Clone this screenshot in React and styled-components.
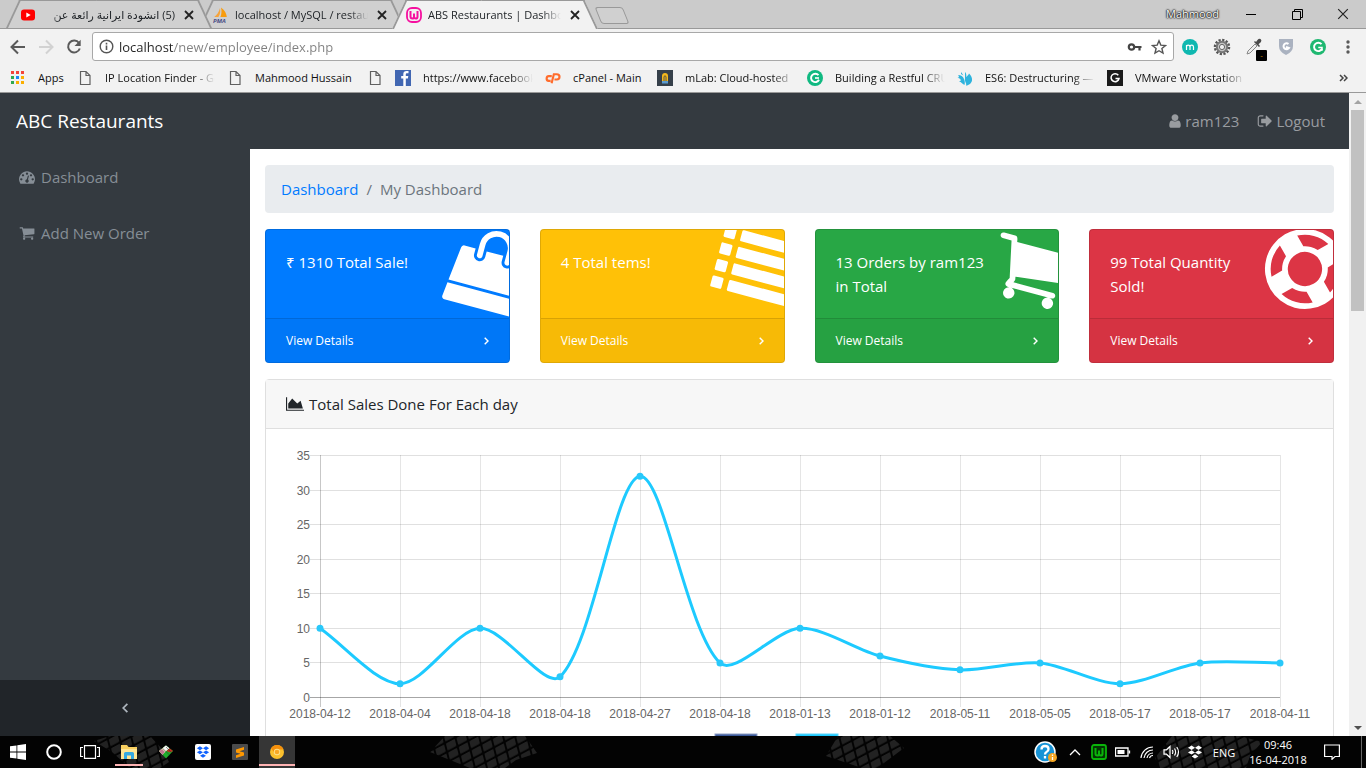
import React from "react";
import styled, { createGlobalStyle } from "styled-components";

const GlobalStyle = createGlobalStyle`
  *, *::before, *::after { box-sizing: border-box; }
  body { margin: 0; font-family: "Open Sans", "Noto Sans", "DejaVu Sans", sans-serif; font-size: 15px; line-height: 24px; color: #212529; background: #fff; }
  a { text-decoration: none; color: inherit; }
  button { font: inherit; border: 0; padding: 0; background: none; color: inherit; }
  svg { display: block; flex: none; }
`;

/* ---------- shared glyphs: [view box, path] ---------- */

const SQUARE = "0 0 1792 1792";

const glyphs = {
  user: [SQUARE, "M1536 1399q0 109-62.5 187t-150.5 78h-854q-88 0-150.5-78t-62.5-187q0-85 8.5-160.5t31.5-152 58.5-131 94-89 134.5-34.5q131 128 313 128t313-128q76 0 134.5 34.5t94 89 58.5 131 31.5 152 8.5 160.5zm-256-887q0 159-112.5 271.5t-271.5 112.5-271.5-112.5-112.5-271.5 112.5-271.5 271.5-112.5 271.5 112.5 112.5 271.5z"],
  signOut: ["96 0 1792 1792", "M704 1440q0 4 1 20t.5 26.5-3 23.5-10 19.5-20.5 6.5h-320q-119 0-203.5-84.5t-84.5-203.5v-704q0-119 84.5-203.5t203.5-84.5h320q13 0 22.5 9.5t9.5 22.5q0 4 1 20t.5 26.5-3 23.5-10 19.5-20.5 6.5h-320q-66 0-113 47t-47 113v704q0 66 47 113t113 47h312l11.5 1 11.5 3 8 5.5 7 9 2 13.5zm928-544q0 26-19 45l-544 544q-19 19-45 19t-45-19-19-45v-288h-448q-26 0-45-19t-19-45v-384q0-26 19-45t45-19h448v-288q0-26 19-45t45-19 45 19l544 544q19 19 19 45z"],
  cart: [SQUARE, "M704 1536q0 52-38 90t-90 38-90-38-38-90 38-90 90-38 90 38 38 90zm896 0q0 52-38 90t-90 38-90-38-38-90 38-90 90-38 90 38 38 90zm128-1088v512q0 24-16.5 42.5t-40.5 21.5l-1044 122q13 60 13 70 0 16-24 64h920q26 0 45 19t19 45-19 45-45 19h-1024q-26 0-45-19t-19-45q0-11 8-31.5t16-36 21.5-40 15.5-29.5l-177-823h-204q-26 0-45-19t-19-45 19-45 45-19h256q16 0 28.5 6.5t19.5 15.5 13 24.5 8 26 5.5 29.5 4.5 26h1201q26 0 45 19t19 45z"],
  gauge: [SQUARE, "M384 1152q0-53-37.5-90.5t-90.5-37.5-90.5 37.5-37.5 90.5 37.5 90.5 90.5 37.5 90.5-37.5 37.5-90.5zm192-448q0-53-37.5-90.5t-90.5-37.5-90.5 37.5-37.5 90.5 37.5 90.5 90.5 37.5 90.5-37.5 37.5-90.5zm428 481l101-382q6-26-7.5-48.5t-38.5-29.5-48 6.5-30 39.5l-101 382q-60 5-107 43.5t-63 98.5q-20 77 20 146t117 89 146-20 89-117q16-60-6-117t-72-91zm660-33q0-53-37.5-90.5t-90.5-37.5-90.5 37.5-37.5 90.5 37.5 90.5 90.5 37.5 90.5-37.5 37.5-90.5zm-640-640q0-53-37.5-90.5t-90.5-37.5-90.5 37.5-37.5 90.5 37.5 90.5 90.5 37.5 90.5-37.5 37.5-90.5zm448 192q0-53-37.5-90.5t-90.5-37.5-90.5 37.5-37.5 90.5 37.5 90.5 90.5 37.5 90.5-37.5 37.5-90.5zm320 448q0 261-141 483-19 29-54 29h-1402q-35 0-54-29-141-221-141-483 0-182 71-348t191-286 286-191 348-71 348 71 286 191 191 286 71 348z"],
  area: ["0 0 2048 1792", "M2048 1536v128h-2048v-1536h128v1408h1920zm-384-1024l256 896h-1664v-576l448-576 576 576z"],
  ring: [SQUARE, "M896 0q182 0 348 71t286 191 191 286 71 348-71 348-191 286-286 191-348 71-348-71-286-191-191-286-71-348 71-348 191-286 286-191 348-71zm0 128q-190 0-361 90l194 194q82-28 167-28t167 28l194-194q-171-90-361-90zm-678 1129l194-194q-28-82-28-167t28-167l-194-194q-90 171-90 361t90 361zm678 407q190 0 361-90l-194-194q-82 28-167 28t-167-28l-194 194q171 90 361 90zm0-384q159 0 271.5-112.5t112.5-271.5-112.5-271.5-271.5-112.5-271.5 112.5-112.5 271.5 112.5 271.5 271.5 112.5zm484-217l194 194q90-171 90-361t-90-361l-194 194q28 82 28 167t-28 167z"],
  bag: ["-214 30 1792 1792", "M1757 1408l35 313q3 28-16 50-19 21-48 21h-1664q-29 0-48-21-19-22-16-50l35-313h1722zm-93-839l86 775h-1708l86-775q3-24 21-40.5t43-16.5h256v128q0 53 37.5 90.5t90.5 37.5 90.5-37.5 37.5-90.5v-128h384v128q0 53 37.5 90.5t90.5 37.5 90.5-37.5 37.5-90.5v-128h256q25 0 43 16.5t21 40.5zm-384-185v256q0 26-19 45t-45 19-45-19-19-45v-256q0-106-75-181t-181-75-181 75-75 181v256q0 26-19 45t-45 19-45-19-19-45v-256q0-159 112.5-271.5t271.5-112.5 271.5 112.5 112.5 271.5z"],
  list: [SQUARE, [128, 512, 896, 1280].map((y) => `M32 ${y}h192q32 0 32 32v192q0 32-32 32h-192q-32 0-32-32v-192q0-32 32-32zM416 ${y}h1344q32 0 32 32v192q0 32-32 32h-1344q-32 0-32-32v-192q0-32 32-32z`).join("")],
};

const Glyph = ({ name, size = 16 }) => {
  const [box, d] = glyphs[name];
  const w = Number(box.split(" ")[2]);
  return (
    <svg width={Math.round((size * w) / 1792)} height={size} viewBox={box} fill="currentColor" overflow="visible" aria-hidden="true">
      <path d={d} />
    </svg>
  );
};

const Chevron = ({ left, size = 8 }) => (
  <svg width={(size * 5) / 8} height={size} viewBox="0 0 5 8" fill="none" stroke="currentColor" strokeWidth="1.400" aria-hidden="true">
    <path d={left ? "M4.300.7L1 4l3.300 3.300" : "M.7.7L4 4 .7 7.300"} />
  </svg>
);

const Dropbox = ({ size, fill }) => (
  <svg width={size} height={size} viewBox="0 0 16 16" fill={fill}>
    <path d="M4.500 1.500l3.500 2.200-3.500 2.200L1 3.700zM11.500 1.500L15 3.700l-3.500 2.200L8 3.700zM4.500 6.200L8 8.400l-3.500 2.200L1 8.400zM11.500 6.200L15 8.400l-3.500 2.200L8 8.400zM8 10.200l3.400 2.200L8 14.600l-3.400-2.200z" />
  </svg>
);

/* ---------- window frame ---------- */

const Screen = styled.div`
  display: flex;
  flex-direction: column;
  height: 100vh;
  overflow: hidden;
`;

const TabStrip = styled.div`
  display: flex;
  justify-content: space-between;
  height: 29px;
  background: #cbcbcb;
  border-bottom: 1px solid #999;
  font-size: 11px;
  line-height: 16px;
`;

const Tabs = styled.div`
  display: flex;
  padding-left: 6px;
`;

const Tab = styled.div`
  position: relative;
  z-index: ${(p) => p.$z};
  display: flex;
  align-items: center;
  gap: 6px;
  width: 205px;
  height: ${(p) => (p.$active ? 29 : 28)}px;
  padding: 2px 14px ${(p) => (p.$active ? 1 : 0)}px 14px;
  & + & { margin-left: -12px; }
  &::before, &::after {
    content: "";
    position: absolute;
    z-index: -1;
    top: 0;
    bottom: 0;
    width: 50%;
    background: ${(p) => (p.$active ? "#f2f2f2" : "#d0d0d0")};
    border-top: 1px solid #999;
  }
  &::before { left: 0; border-left: 2px solid #999; transform: skewX(-25deg); transform-origin: bottom left; }
  &::after { right: 0; border-right: 2px solid #999; transform: skewX(25deg); transform-origin: bottom right; }
`;

const TabTitle = styled.span`
  flex: 1;
  min-width: 0;
  overflow: hidden;
  white-space: nowrap;
  mask-image: linear-gradient(${(p) => (p.dir === "rtl" ? "270deg" : "90deg")}, #000 86%, transparent);
`;

const TabClose = styled.button`
  display: grid;
  place-items: center;
  width: 16px;
  height: 16px;
`;

const NewTab = styled.button`
  width: 28px;
  height: 17px;
  margin: 7px 0 0 1px;
  border: 1px solid #999;
  border-radius: 3px;
  background: #d0d0d0;
  transform: skewX(22deg);
`;

const WindowControls = styled.div`
  display: flex;
  align-items: center;
`;

const Profile = styled.span`
  padding-right: 9px;
  color: #fff;
  text-shadow: 0 0 2px #000, 0 0 2px #000, 0 0 1px #000;
`;

const WindowButton = styled.button`
  display: grid;
  place-items: center;
  width: 46px;
  height: 28px;
`;

const Toolbar = styled.div`
  display: flex;
  align-items: center;
  height: 35px;
  padding: 0 4px;
  background: #f2f2f2;
`;

const ToolButton = styled.button`
  position: relative;
  display: grid;
  place-items: center;
  width: ${(p) => p.$w || 32}px;
  height: 28px;
`;

const AddressBar = styled.label`
  display: flex;
  align-items: center;
  flex: 1;
  gap: 5px;
  height: 29px;
  margin-left: 4px;
  padding: 0 6px;
  border: 1px solid #a8a8a8;
  border-radius: 3px;
  background: #fff;
`;

const AddressInput = styled.input`
  flex: 1;
  min-width: 0;
  padding: 0;
  border: 0;
  outline: 0;
  font: 13px/20px "Open Sans", "Noto Sans", sans-serif;
  color: transparent;
  background: linear-gradient(90deg, #222 55px, #808080 55px);
  background-clip: text;
  -webkit-background-clip: text;
`;

const AddressActions = styled.span`
  display: flex;
  gap: 9px;
`;

const BadgeDot = styled.span`
  position: absolute;
  right: 3px;
  bottom: 0;
  width: 11px;
  height: 11px;
  border-radius: 1px;
  background: #000;
  color: #d98c00;
  font-size: 8px;
  line-height: 10px;
`;

const Bookmarks = styled.nav`
  display: flex;
  align-items: center;
  gap: 12px;
  height: 29px;
  padding: 0 18px 0 10px;
  border-bottom: 1px solid #999;
  background: #f2f2f2;
  font-size: 11px;
  line-height: 16px;
  color: #111;
`;

const Bookmark = styled.a`
  display: flex;
  align-items: center;
  gap: 12px;
`;

const BookmarkLabel = styled.span`
  width: ${(p) => p.$w}px;
  overflow: hidden;
  white-space: nowrap;
  ${(p) => p.$fade && "mask-image: linear-gradient(90deg, #000 80%, transparent);"}
`;

const More = styled.button`
  margin-left: auto;
`;

/* ---------- web page ---------- */

const Viewport = styled.div`
  display: flex;
  flex: 1;
  min-height: 0;
`;

const Page = styled.div`
  display: flex;
  flex: 1;
  flex-direction: column;
  min-width: 0;
`;

const Navbar = styled.header`
  display: flex;
  align-items: center;
  justify-content: space-between;
  height: 56px;
  padding: 0 16px;
  background: #343a40;
`;

const Brand = styled.a`
  font-size: 19px;
  line-height: 30px;
  color: #fff;
`;

const NavLinks = styled.nav`
  display: flex;
`;

const NavLink = styled.a`
  display: flex;
  align-items: center;
  padding: 0 8px;
  color: #999ca0;
`;

const IconCell = styled.span`
  display: grid;
  place-items: center;
  width: 21px;
`;

const Body = styled.div`
  display: flex;
  flex: 1;
  min-height: 0;
`;

const Sidebar = styled.nav`
  display: flex;
  flex-direction: column;
  width: 250px;
  background: #343a40;
  color: #868e96;
`;

const SideLink = styled.a`
  display: flex;
  align-items: center;
  gap: 4px;
  padding: 16px;
`;

const Collapse = styled.button`
  display: grid;
  place-items: center;
  height: 56px;
  margin-top: auto;
  background: #212529;
  color: #adb5bd;
`;

const Main = styled.main`
  flex: 1;
  min-width: 0;
  padding: 16px 15px 0;
  overflow: hidden;
  background: #fff;
`;

const Breadcrumb = styled.nav`
  display: flex;
  gap: 8px;
  padding: 12px 16px;
  margin-bottom: 16px;
  border-radius: 4px;
  background: #e9ecef;
  color: #6c757d;
  a { color: #007bff; }
`;

const Cards = styled.section`
  display: grid;
  grid-template-columns: repeat(4, 1fr);
  gap: 30px;
  margin-bottom: 16px;
`;

const StatCard = styled.article`
  position: relative;
  display: flex;
  flex-direction: column;
  overflow: hidden;
  border: 1px solid rgba(0, 0, 0, 0.125);
  border-radius: 4px;
  background: ${(p) => p.$color};
  color: #fff;
`;

const StatBody = styled.div`
  flex: 1;
  min-height: 88px;
  padding: 20px 68px 20px 20px;
`;

const StatIcon = styled.div`
  position: absolute;
  top: -25px;
  right: -25px;
  display: flex;
  justify-content: center;
  width: 105px;
  height: 120px;
  padding-top: 24px;
  transform: rotate(15deg);
`;

const StatFooter = styled.a`
  position: relative;
  display: flex;
  align-items: center;
  justify-content: space-between;
  padding: 12px 20px;
  border-top: 1px solid rgba(0, 0, 0, 0.125);
  background: rgba(0, 0, 0, 0.03);
  font-size: 12px;
  line-height: 19px;
`;

const Panel = styled.section`
  border: 1px solid #dfdfdf;
  border-radius: 4px;
`;

const PanelHeader = styled.h2`
  display: flex;
  align-items: center;
  gap: 5px;
  margin: 0;
  padding: 12px 20px;
  border-bottom: 1px solid #dfdfdf;
  background: #f7f7f7;
  font-size: 15px;
  font-weight: 400;
`;

const PanelBody = styled.div`
  padding: 20px;
`;

const ChartSvg = styled.svg`
  width: 100%;
  height: auto;
  font: 12px "Liberation Sans", Arial, sans-serif;
`;

const Scrollbar = styled.div`
  display: flex;
  flex-direction: column;
  align-items: center;
  width: 17px;
  background: #f1f1f1;
`;

const ScrollArrow = styled.button`
  display: grid;
  place-items: center;
  width: 17px;
  height: 17px;
`;

const ScrollTrack = styled.div`
  flex: 1;
`;

const ScrollThumb = styled.div`
  width: 13px;
  height: 201px;
  background: #c1c1c1;
`;

/* ---------- taskbar ---------- */

const TaskbarRoot = styled.footer`
  position: relative;
  display: flex;
  justify-content: space-between;
  height: 32px;
  overflow: hidden;
  background: #030303;
  color: #fff;
  font-size: 11px;
  line-height: 15px;
`;

const Mesh = styled.svg`
  position: absolute;
  inset: 0;
`;

const TaskGroup = styled.div`
  position: relative;
  display: flex;
  gap: ${(p) => p.$gap || 0}px;
`;

const TaskButton = styled.button`
  display: grid;
  place-items: center;
  width: ${(p) => p.$w || 36}px;
  height: 32px;
  background: ${(p) => (p.$active ? "#363636" : "none")};
`;

const RunningButton = styled(TaskButton)`
  position: relative;
  &::after {
    content: "";
    position: absolute;
    left: ${(p) => (p.$active ? 0 : 4)}px;
    right: ${(p) => (p.$active ? 0 : 4)}px;
    bottom: 2px;
    height: 2px;
    background: #ffb3b3;
  }
`;

const Pinned = styled(TaskGroup)`
  margin-left: 3px;
`;

const Clock = styled.span`
  padding-bottom: 1px;
`;

const ShowDesktop = styled.button`
  width: 5px;
  margin-left: 12px;
  border-left: 1px solid #666;
`;

/* ---------- chart ---------- */

const sales = [
  ["2018-04-12", 10], ["2018-04-04", 2], ["2018-04-18", 10], ["2018-04-18", 3], ["2018-04-27", 32],
  ["2018-04-18", 5], ["2018-01-13", 10], ["2018-01-12", 6], ["2018-05-11", 4], ["2018-05-05", 5],
  ["2018-05-17", 2], ["2018-05-17", 5], ["2018-04-11", 5],
];

const LEFT = 34, STEP = 80, TOP = 6.5, BOTTOM = 248.5, TENSION = 0.3;
const points = sales.map(([, v], i) => [LEFT + i * STEP, BOTTOM - (v * (BOTTOM - TOP)) / 35]);

const spline = () => {
  const clampY = (y) => Math.max(TOP, Math.min(BOTTOM, y));
  const ctrl = points.map((cur, i) => {
    const prev = points[i - 1] || cur;
    const next = points[i + 1] || cur;
    const a = Math.hypot(cur[0] - prev[0], cur[1] - prev[1]);
    const b = Math.hypot(next[0] - cur[0], next[1] - cur[1]);
    const fa = (TENSION * a) / (a + b);
    const fb = (TENSION * b) / (a + b);
    const dx = next[0] - prev[0];
    const dy = next[1] - prev[1];
    return [cur[0] - fa * dx, clampY(cur[1] - fa * dy), cur[0] + fb * dx, clampY(cur[1] + fb * dy)];
  });
  return points
    .map((p, i) => (i === 0 ? `M${p}` : `C${ctrl[i - 1][2]} ${ctrl[i - 1][3]} ${ctrl[i][0]} ${ctrl[i][1]} ${p}`))
    .join("");
};

const SalesChart = () => (
  <ChartSvg viewBox="0 0 1027 308" role="img" aria-label="Total sales for each day">
    {[0, 5, 10, 15, 20, 25, 30, 35].map((v) => {
      const y = Math.floor(BOTTOM - (v * (BOTTOM - TOP)) / 35) + 0.5;
      return (
        <g key={v}>
          <line x1="24" x2="994" y1={y} y2={y} stroke={v ? "rgba(0,0,0,.12)" : "rgba(0,0,0,.35)"} />
          <text x="24" y={y + 4} textAnchor="end" fill="#666">{v}</text>
        </g>
      );
    })}
    {sales.map(([day], i) => {
      const x = LEFT + i * STEP;
      return (
        <g key={i}>
          <line x1={x + 0.5} x2={x + 0.5} y1="6" y2="258" stroke={i ? "rgba(0,0,0,.1)" : "rgba(0,0,0,.22)"} />
          <text x={x} y="269" textAnchor="middle" fill="#666">{day}</text>
        </g>
      );
    })}
    <path d={spline()} fill="none" stroke="#1dcaff" strokeWidth="3" />
    {points.map(([x, y], i) => (
      <circle key={i} cx={x} cy={y} r="3.500" fill="#29c8fa" />
    ))}
    <rect x="429" y="285" width="42" height="12" fill="#3b5998" stroke="#8e9dc3" />
    <rect x="510" y="285" width="42" height="12" fill="#1dcaff" stroke="#5ed6fb" />
    <text x="475" y="296" fill="#666">Cost</text>
    <text x="556" y="296" fill="#666">Sales</text>
  </ChartSvg>
);

/* ---------- small drawings ---------- */

const YouTube = () => (
  <svg width="16" height="16" viewBox="0 0 16 16">
    <rect x="1" y="2.500" width="14" height="11" rx="3" fill="#f00" />
    <path d="M6.300 5.500v5l4.400-2.500z" fill="#fff" />
  </svg>
);

const PhpMyAdmin = () => (
  <svg width="16" height="16" viewBox="0 0 16 16">
    <path d="M7 1c.6 3 .4 6-1.600 9H1.200C4 8 6 5 7 1z" fill="#f6a33a" />
    <path d="M8 .5c4 3 5.400 6 5.800 9.500H7.400C8.600 7 8.800 4 8 .5z" fill="#f89c0e" />
    <text x="0" y="16" fontSize="6" fontWeight="700" fontStyle="italic" fill="#4a4f86">PMA</text>
  </svg>
);

const Wamp = ({ color, bg = "none", radius = 5 }) => (
  <svg width="16" height="16" viewBox="0 0 16 16" fill="none" stroke={color}>
    <rect x="1" y="1" width="14" height="14" rx={radius} strokeWidth="1.800" fill={bg} />
    <path d="M4.500 4v5.500q0 2 1.800 2T8 9.500V6.500v3q0 2 1.800 2t1.700-2V4" strokeWidth="2" />
  </svg>
);

const Cross = ({ size = 10, width = 1.8 }) => (
  <svg width={size} height={size} viewBox="0 0 10 10" stroke="#222" strokeWidth={width}>
    <path d="M1 1l8 8M9 1L1 9" />
  </svg>
);

const AppsGrid = () => (
  <svg width="16" height="16" viewBox="0 0 16 16">
    {["#f4443a", "#f4443a", "#f4443a", "#2fa84f", "#1e88f7", "#fbaf00", "#2fa84f", "#fbaf00", "#fbaf00"].map((c, i) => (
      <rect key={i} x={1 + (i % 3) * 5} y={1 + Math.floor(i / 3) * 5} width="3" height="3" fill={c} />
    ))}
  </svg>
);

const Sheet = () => (
  <svg width="16" height="16" viewBox="0 0 16 16" fill="none" stroke="#606060">
    <path d="M3.500 1.500h5.500l4 4v9h-9.500zM9 1.500v4h4" strokeWidth="1.200" />
  </svg>
);

const Facebook = () => (
  <svg width="16" height="16" viewBox="0 0 16 16">
    <rect width="16" height="16" fill="#4267b2" />
    <path d="M13.500 3.300h-1.400c-1 0-1.300.5-1.300 1.300V6h2.500l-.4 2.400h-2.100V16H8.300V8.400H6.200V6h2.100V4.200C8.300 2.200 9.500 1 11.500 1c1 0 1.600.1 2 .1z" fill="#fff" />
  </svg>
);

const CPanel = () => (
  <svg width="16" height="16" viewBox="0 0 17 16" fill="none" stroke="#ff6c2c" strokeWidth="2.300">
    <path d="M7.200 6H4.500A2.500 2.500 0 0 0 4 11h2M7 13.500L9.400 4h3.200a2.600 2.600 0 0 1 0 5.600H10" />
  </svg>
);

const MLab = () => (
  <svg width="16" height="16" viewBox="0 0 16 16">
    <rect width="16" height="16" fill="#36404a" />
    <path d="M5 11V6a3 3 0 0 1 6 0v5z" fill="#f5b81c" />
    <path d="M7 11V6.500q1-1.500 2 0V11" fill="none" stroke="#36404a" strokeWidth=".8" />
    <rect x="5" y="11" width="6" height="2.500" fill="#5b9bd0" />
  </svg>
);

const CBadge = ({ bg, arrow }) => (
  <svg width="16" height="16" viewBox="0 0 16 16">
    <circle cx="8" cy="8" r="8" fill={bg} />
    <path d="M11.500 5.200A4.200 4.200 0 1 0 12 9.800" fill="none" stroke="#fff" strokeWidth="1.900" />
    {arrow ? (
      <path d="M8.300 8.500h3.700v3.300" fill="none" stroke="#fff" strokeWidth="1.500" />
    ) : (
      <path d="M8 8h4" fill="none" stroke="#fff" strokeWidth="1.600" />
    )}
  </svg>
);

const Splash = () => (
  <svg width="16" height="16" viewBox="0 0 16 16" fill="#2eb3dd">
    <path d="M8 2c2 2 1 4 1.500 5 1-1.500 2-2 2.500-3.500 2 2 3.500 4.500 3 7S12 15.500 9 15.500C10 13 7.500 12 8 9z" />
    <path d="M1 5c3 0 5 1.500 6 4s1 4 .5 6C5 14 4.500 12 2 11.500c2-.5 2-1 1.500-2S2 8 .5 8c1.500-.5 2-1.500.5-3zM4 2l2.500 3.500L4 4zM6 .5l1 3z" />
  </svg>
);

const GBox = () => (
  <svg width="16" height="16" viewBox="0 0 16 16">
    <rect width="16" height="16" fill="#1b1b1b" />
    <path d="M11.300 5.300A4 4 0 1 0 12 8.500H8.500" fill="none" stroke="#fff" strokeWidth="1.500" />
  </svg>
);

const Cog = () => (
  <svg width="18" height="18" viewBox="0 0 18 18" fill="none">
    <circle cx="9" cy="9" r="7" stroke="#555" strokeWidth="2.500" strokeDasharray="2.200 1.460" />
    <circle cx="9" cy="9" r="5.200" stroke="#777" strokeWidth="2" fill="#c4c4c4" />
    <circle cx="9" cy="9" r="2.600" stroke="#666" fill="#eee" />
  </svg>
);

const Pipette = () => (
  <svg width="18" height="18" viewBox="0 0 18 18">
    <path d="M2 16l1-3 7-7 2 2-7 7z" fill="#eee" stroke="#888" />
    <path d="M9 4l5 5 1-1-1.500-1.800L16 4q1-2-.5-3T12.500 2L11 4 10 3z" fill="#4a4a4a" />
  </svg>
);

const bookmarks = [
  { icon: <AppsGrid />, label: "Apps", w: 27 },
  { icon: <Sheet />, label: "IP Location Finder - Geo", w: 110, fade: true },
  { icon: <Sheet />, label: "Mahmood Hussain", w: 100 },
  { icon: <Sheet /> },
  { icon: <Facebook />, label: "https://www.facebook.com", w: 110, fade: true },
  { icon: <CPanel />, label: "cPanel - Main", w: 72 },
  { icon: <MLab />, label: "mLab: Cloud-hosted", w: 110, fade: true },
  { icon: <CBadge bg="#10b981" />, label: "Building a Restful CRUD", w: 110, fade: true },
  { icon: <Splash />, label: "ES6: Destructuring — a", w: 110, fade: true },
  { icon: <GBox />, label: "VMware Workstation", w: 110, fade: true },
];

const BrowserChrome = () => (
  <header>
    <TabStrip>
      <Tabs>
        <Tab $z={2}>
          <YouTube />
          <TabTitle dir="rtl">(5) انشودة ايرانية رائعة عن</TabTitle>
          <TabClose aria-label="Close tab"><Cross /></TabClose>
        </Tab>
        <Tab $z={1}>
          <PhpMyAdmin />
          <TabTitle>localhost / MySQL / restaurant</TabTitle>
          <TabClose aria-label="Close tab"><Cross /></TabClose>
        </Tab>
        <Tab $z={3} $active>
          <Wamp color="#f5109f" />
          <TabTitle>ABS Restaurants | Dashboard</TabTitle>
          <TabClose aria-label="Close tab"><Cross /></TabClose>
        </Tab>
        <NewTab aria-label="New tab" />
      </Tabs>
      <WindowControls>
        <Profile>Mahmood</Profile>
        <WindowButton aria-label="Minimize">
          <svg width="10" height="10" stroke="#000"><path d="M0 5.500h10" /></svg>
        </WindowButton>
        <WindowButton aria-label="Restore">
          <svg width="11" height="11" fill="none" stroke="#000"><path d="M.5 2.500h8v8h-8zM2.500 2.500v-2h8v8h-2" /></svg>
        </WindowButton>
        <WindowButton aria-label="Close"><Cross size={12} width={1} /></WindowButton>
      </WindowControls>
    </TabStrip>
    <Toolbar>
      <ToolButton $w={28} aria-label="Back">
        <svg width="16" height="16" fill="none" stroke="#5a5a5a" strokeWidth="2"><path d="M15 8H2M8 1.500L1.500 8 8 14.500" /></svg>
      </ToolButton>
      <ToolButton $w={28} aria-label="Forward">
        <svg width="16" height="16" fill="none" stroke="#d2d2d2" strokeWidth="2"><path d="M1 8h13M8 1.500L14.500 8 8 14.500" /></svg>
      </ToolButton>
      <ToolButton $w={28} aria-label="Reload">
        <svg width="16" height="16" fill="none" stroke="#5a5a5a" strokeWidth="2"><path d="M13 4A6 6 0 1 0 13.800 9.500" /><path d="M14.700.8V7H8.500z" fill="#5a5a5a" stroke="none" /></svg>
      </ToolButton>
      <AddressBar>
        <svg width="15" height="15" fill="none" stroke="#555"><circle cx="7.500" cy="7.500" r="6.300" strokeWidth="1.400" /><path d="M7.500 6.500V11M7.500 3.800v1.600" strokeWidth="1.600" /></svg>
        <AddressInput aria-label="Address" defaultValue="localhost/new/employee/index.php" />
        <AddressActions>
          <svg width="16" height="16" fill="none" stroke="#444" strokeWidth="2.200"><circle cx="5.500" cy="8" r="2.700" /><path d="M8 8h7.500M13.500 8v3.500" /></svg>
          <svg width="16" height="16" viewBox="0 0 16 16" fill="none" stroke="#555" strokeWidth="1.400"><path d="M8 1.800l1.800 4.300 4.700.4-3.600 3 1.100 4.600L8 11.700l-4 2.400 1.100-4.600-3.600-3 4.700-.4z" /></svg>
        </AddressActions>
      </AddressBar>
      <ToolButton aria-label="Momentum">
        <svg width="16" height="16"><circle cx="8" cy="8" r="8" fill="#0fb8b0" /><path d="M4.500 11V6M4.500 8q0-1.800 1.700-1.800T8 8v3M8 8q0-1.800 1.700-1.800T11.500 8v3" fill="none" stroke="#fff" strokeWidth="1.200" /></svg>
      </ToolButton>
      <ToolButton aria-label="Settings"><Cog /></ToolButton>
      <ToolButton aria-label="Colour picker"><Pipette /><BadgeDot>-</BadgeDot></ToolButton>
      <ToolButton aria-label="Shield">
        <svg width="14" height="16"><path d="M0 0h14v7q0 6-7 9-7-3-7-9z" fill="#aab2c0" /><path d="M9.500 5a3 3 0 1 0 .5 4L7 8" fill="none" stroke="#fff" strokeWidth="2" /></svg>
      </ToolButton>
      <ToolButton aria-label="Grammar check"><CBadge bg="#1fb871" arrow /></ToolButton>
      <ToolButton $w={28} aria-label="Menu">
        <svg width="4" height="14" fill="#5a5a5a"><circle cx="2" cy="2" r="1.700" /><circle cx="2" cy="7" r="1.700" /><circle cx="2" cy="12" r="1.700" /></svg>
      </ToolButton>
    </Toolbar>
    <Bookmarks>
      {bookmarks.map((b, i) => (
        <Bookmark key={i} href="#" aria-label={b.label || "Bookmark"}>
          {b.icon}
          {b.label && <BookmarkLabel $w={b.w} $fade={b.fade}>{b.label}</BookmarkLabel>}
        </Bookmark>
      ))}
      <More aria-label="More bookmarks">
        <svg width="9" height="8" fill="none" stroke="#444" strokeWidth="1.500"><path d="M1 1l3 3-3 3M5 1l3 3-3 3" /></svg>
      </More>
    </Bookmarks>
  </header>
);

const stats = [
  { text: "₹ 1310 Total Sale!", color: "#007bff", icon: "bag" },
  { text: "4 Total tems!", color: "#ffc107", icon: "list" },
  { text: "13 Orders by ram123 in Total", color: "#28a745", icon: "cart" },
  { text: "99 Total Quantity Sold!", color: "#dc3545", icon: "ring" },
];

const DashboardPage = () => (
  <Page>
    <Navbar>
      <Brand href="#">ABC Restaurants</Brand>
      <NavLinks>
        <NavLink href="#"><IconCell><Glyph name="user" /></IconCell>ram123</NavLink>
        <NavLink href="#"><IconCell><Glyph name="signOut" /></IconCell>Logout</NavLink>
      </NavLinks>
    </Navbar>
    <Body>
      <Sidebar>
        <SideLink href="#"><IconCell><Glyph name="gauge" /></IconCell>Dashboard</SideLink>
        <SideLink href="#"><IconCell><Glyph name="cart" /></IconCell>Add New Order</SideLink>
        <Collapse aria-label="Collapse sidebar"><Chevron left size={10} /></Collapse>
      </Sidebar>
      <Main>
        <Breadcrumb aria-label="Breadcrumb">
          <a href="#">Dashboard</a>
          <span>/</span>
          <span>My Dashboard</span>
        </Breadcrumb>
        <Cards>
          {stats.map((s) => (
            <StatCard key={s.icon} $color={s.color}>
              <StatBody>{s.text}</StatBody>
              <StatIcon><Glyph name={s.icon} size={80} /></StatIcon>
              <StatFooter href="#">View Details<Chevron /></StatFooter>
            </StatCard>
          ))}
        </Cards>
        <Panel>
          <PanelHeader><Glyph name="area" />Total Sales Done For Each day</PanelHeader>
          <PanelBody><SalesChart /></PanelBody>
        </Panel>
      </Main>
    </Body>
  </Page>
);

const meshPatches = [
  "94,5 110,0 150,0 163,14 169,26 160,32 130,32 112,16",
  "430,16 445,0 525,0 537,17 516,24 505,32 470,32",
  "826,20 838,0 890,0 904,12 888,24 878,32 862,32",
  "1155,22 1172,0 1240,0 1262,6 1250,20 1246,32 1160,32",
];

const Taskbar = () => (
  <TaskbarRoot>
    <Mesh width="1366" height="32" aria-hidden="true">
      <defs>
        <pattern id="cells" width="12" height="9" patternUnits="userSpaceOnUse" patternTransform="rotate(-28) skewX(-14)">
          <rect width="10" height="7" rx="1" fill="#222" />
        </pattern>
      </defs>
      {meshPatches.map((p) => <polygon key={p} points={p} fill="url(#cells)" />)}
    </Mesh>
    <TaskGroup>
      <TaskButton aria-label="Start">
        <svg width="16" height="16" fill="#fff"><path d="M0 2.300L6.500 1.400V7.600H0zM7.300 1.300L16 0v7.600H7.300zM0 8.400h6.500v6.200L0 13.700zM7.300 8.400H16V16l-8.700-1.300z" /></svg>
      </TaskButton>
      <TaskButton aria-label="Cortana">
        <svg width="16" height="16" fill="none" stroke="#fff" strokeWidth="2"><circle cx="8" cy="8" r="6.800" /></svg>
      </TaskButton>
      <TaskButton aria-label="Task view">
        <svg width="20" height="14" fill="none" stroke="#fff" strokeWidth="1.200"><path d="M4.500.6h11v12.800h-11zM3 2.500H.6v9H3M17 2.500h2.400v9H17" /></svg>
      </TaskButton>
      <Pinned $gap={1}>
        <RunningButton aria-label="File Explorer">
          <svg width="16" height="16"><path d="M0 1h6l1.500 2H16v12H0z" fill="#f8cf5f" /><path d="M0 5h16v10H0z" fill="#ffe594" /><path d="M3 15V9.500q0-1.500 1.500-1.500h7q1.500 0 1.500 1.500V15h-3v-3.500H6V15z" fill="#36a9e1" /></svg>
        </RunningButton>
        <TaskButton aria-label="Colour tool">
          <svg width="16" height="14"><path d="M1 6l7-5.500L15 6l-7 7.500z" fill="#1fae2c" /><path d="M1 6l7-5.500L10 4 4.500 9.700z" fill="#f1ecc4" /><path d="M8 .5l3.500 2.800L8 6 5 3z" fill="#f6f6f6" /><path d="M11.500 3.300L15 6l-3 1.500L8.500 6z" fill="#c03020" /><path d="M1 6l3.500 3.700L7 7 4 4z" fill="#c07890" /><path d="M4.500 3.300L11.500 10M8 2L13 7" stroke="#333" strokeWidth=".5" /></svg>
        </TaskButton>
        <TaskButton aria-label="Dropbox">
          <svg width="16" height="16"><rect width="16" height="16" rx="2" fill="#fff" /><g transform="translate(1 1)"><Dropbox size={14} fill="#0f62fe" /></g></svg>
        </TaskButton>
        <TaskButton aria-label="Sublime Text">
          <svg width="16" height="16"><rect width="16" height="16" rx="1" fill="#4b4b4b" /><path d="M12 3v2.800L7.500 7.200l4.500 1.400v3L4 14v-2.800l4.500-1.400L4 8.400v-3z" fill="#ff9800" /></svg>
        </TaskButton>
        <RunningButton $active aria-label="Chrome Canary">
          <svg width="16" height="16"><circle cx="8" cy="8" r="7" fill="#fbc02d" /><path d="M8 1a7 7 0 0 1 6.500 4.500H8A3 3 0 0 0 5 8L2 4.500A7 7 0 0 1 8 1z" fill="#f58f0b" /><circle cx="8" cy="8" r="3.200" fill="#fde08a" /><circle cx="8" cy="8" r="2.300" fill="#f9a825" /></svg>
        </RunningButton>
      </Pinned>
    </TaskGroup>
    <TaskGroup>
      <TaskButton $w={34} aria-label="Help">
        <svg width="24" height="22"><circle cx="11" cy="11" r="10" fill="#1793d6" stroke="#fff" strokeWidth="1.500" /><path d="M7.500 8.500q0-3.500 3.500-3.500t3.500 3q0 2-1.700 2.800T11 13.500M11 15v2.500" fill="none" stroke="#fff" strokeWidth="2.300" /><circle cx="18.500" cy="16.500" r="4.500" fill="#f5a623" /><path d="M18.500 16v3M18.500 13.500v1.500" stroke="#fff" strokeWidth="1.300" /></svg>
      </TaskButton>
      <TaskButton $w={24} aria-label="Show hidden icons">
        <svg width="12" height="8" fill="none" stroke="#fff" strokeWidth="1.300"><path d="M1 7l5-5 5 5" /></svg>
      </TaskButton>
      <TaskButton $w={24} aria-label="Wamp server"><Wamp color="#0ab50a" bg="#033503" radius={2} /></TaskButton>
      <TaskButton $w={24} aria-label="Battery">
        <svg width="16" height="10" fill="none" stroke="#fff"><path d="M.5 1h12.500v8H.5zM14.500 3.500v3" strokeWidth="1.300" /><rect x="2.500" y="3" width="7" height="4" fill="#fff" stroke="none" /></svg>
      </TaskButton>
      <TaskButton $w={24} aria-label="Network">
        <svg width="14" height="14" fill="none" stroke="#fff" strokeWidth="1.200"><path d="M1 13A12 12 0 0 1 13 2M4 13a9 9 0 0 1 9-8M7 13a6 6 0 0 1 6-5M9.500 13a3.500 3.500 0 0 1 3.500-2.500" /></svg>
      </TaskButton>
      <TaskButton $w={24} aria-label="Volume">
        <svg width="17" height="14" fill="none" stroke="#fff" strokeWidth="1.200"><path d="M1 4.800h2.500L7 1.500v11L3.500 9.200H1zM9.300 5q1.200 2 0 4M11.500 3.500q2.200 3.500 0 7M13.800 2q3.400 5 0 10" /></svg>
      </TaskButton>
      <TaskButton $w={24} aria-label="Dropbox status"><Dropbox size={16} fill="#fff" /></TaskButton>
      <TaskButton $w={34}>ENG</TaskButton>
      <TaskButton $w={74}><Clock>09:46<br />16-04-2018</Clock></TaskButton>
      <TaskButton $w={34} aria-label="Action center">
        <svg width="16" height="16" fill="none" stroke="#fff" strokeWidth="1.200"><path d="M.6 1h14.800v11.500H11L8 15.300V12.500H.6z" /></svg>
      </TaskButton>
      <ShowDesktop aria-label="Show desktop" />
    </TaskGroup>
  </TaskbarRoot>
);

export default function App() {
  return (
    <Screen>
      <GlobalStyle />
      <BrowserChrome />
      <Viewport>
        <DashboardPage />
        <Scrollbar>
          <ScrollArrow aria-label="Scroll up"><svg width="8" height="4" fill="#a3a3a3"><path d="M0 4l4-4 4 4z" /></svg></ScrollArrow>
          <ScrollTrack><ScrollThumb /></ScrollTrack>
          <ScrollArrow aria-label="Scroll down"><svg width="8" height="4" fill="#505050"><path d="M0 0l4 4 4-4z" /></svg></ScrollArrow>
        </Scrollbar>
      </Viewport>
      <Taskbar />
    </Screen>
  );
}
